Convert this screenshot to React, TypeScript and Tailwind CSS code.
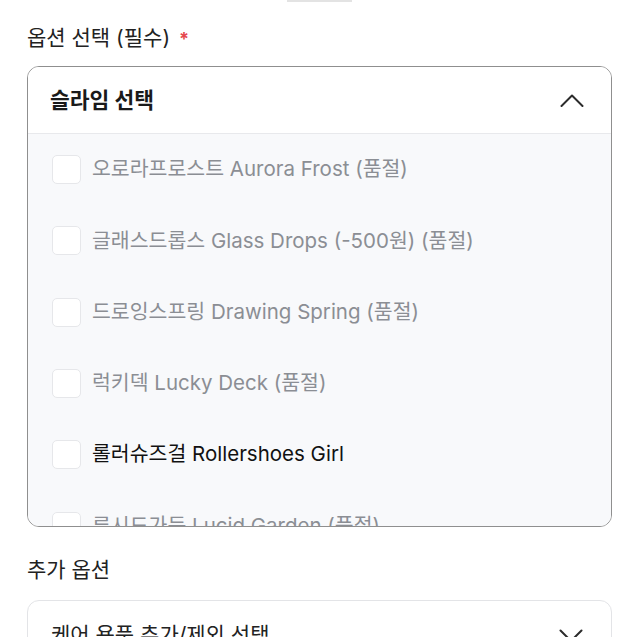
import React from "react";

const items: { label: string; soldOut: boolean }[] = [
  { label: "오로라프로스트 Aurora Frost (품절)", soldOut: true },
  { label: "글래스드롭스 Glass Drops (-500원) (품절)", soldOut: true },
  { label: "드로잉스프링 Drawing Spring (품절)", soldOut: true },
  { label: "럭키덱 Lucky Deck (품절)", soldOut: true },
  { label: "롤러슈즈걸 Rollershoes Girl", soldOut: false },
  { label: "루시드가든 Lucid Garden (품절)", soldOut: true },
];

export default function App() {
  return (
    <div
      className="w-[637px] h-[637px] overflow-hidden bg-white"
      style={{ fontFamily: 'Inter, "Noto Sans CJK KR", sans-serif' }}
    >
      <div className="h-[2px] w-[65px] ml-[287px] bg-[#e3e3e3]" />
      <div className="pl-[27px] pr-[25px]">
        <div className="mt-[22px] h-[28px] flex items-center text-[21px] text-[#222]">
          <span>옵션 선택 (필수)</span>
          <span className="ml-[9px] text-[#e5484d] text-[18px] font-bold">*</span>
        </div>

        <div className="mt-[14px] h-[461px] rounded-[12px] border-[1.5px] border-[#8f8f8f] overflow-hidden flex flex-col">
          <div className="h-[67px] shrink-0 bg-white flex items-center justify-between pl-[22px] pr-[27px] border-b border-[#e8e9ec]">
            <span className="text-[21.5px] font-bold text-[#1a1a1a]">슬라임 선택</span>
            <svg width="24" height="13" viewBox="0 0 24 13" fill="none">
              <path d="M1.5 12 L12 1.5 L22.5 12" stroke="#2b2b2b" strokeWidth="2" strokeLinecap="round" strokeLinejoin="round" />
            </svg>
          </div>
          <div className="flex-1 bg-[#f8f9fb] overflow-hidden">
            {items.map((it) => (
              <div key={it.label} className="h-[71.3px] flex items-center pl-[24px]">
                <div className="w-[29px] h-[29px] rounded-[5px] bg-white border border-[#e6e7ea] shrink-0" />
                <span
                  className={
                    "ml-[11px] text-[20.5px] whitespace-nowrap " +
                    (it.soldOut ? "text-[#8b8e94]" : "text-[#111]")
                  }
                >
                  {it.label}
                </span>
              </div>
            ))}
          </div>
        </div>

        <div className="mt-[29px] h-[28px] flex items-center text-[21px] text-[#222]">
          추가 옵션
        </div>

        <div className="mt-[16px] h-[70px] rounded-[12px] border border-[#e3e4e7] bg-white flex items-center justify-between pl-[23px] pr-[28px]">
          <span className="text-[21px] text-[#222]">케어 용품 추가/제외 선택</span>
          <svg width="24" height="13" viewBox="0 0 24 13" fill="none">
            <path d="M1.5 1.5 L12 12 L22.5 1.5" stroke="#2b2b2b" strokeWidth="2" strokeLinecap="round" strokeLinejoin="round" />
          </svg>
        </div>
      </div>
    </div>
  );
}
